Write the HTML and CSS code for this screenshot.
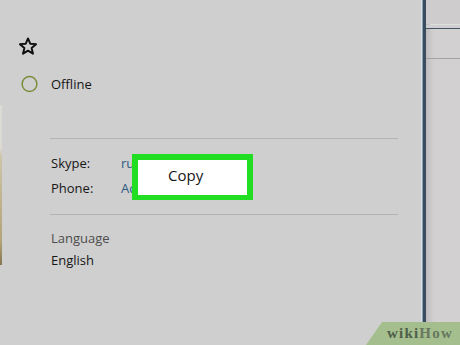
FILE: index.html
```html
<!DOCTYPE html>
<html lang="en">
<head>
<meta charset="utf-8">
<title>Contact profile</title>
<link rel="stylesheet" href="styles.css">
</head>
<body>
<div class="screen">
  <div class="edge"><div class="edge-photo"></div></div>
  <main class="panel">
    <div class="fav">
      <svg class="star" width="18" height="17" viewBox="0 0 18 17">
        <polygon points="9,0.4 11.23,5.73 17.08,6.17 12.61,9.97 14,15.68 9,12.6 4,15.68 5.39,9.97 0.92,6.17 6.77,5.73" />
      </svg>
    </div>
    <div class="status">
      <span class="status-icon">
        <svg width="18" height="18" viewBox="0 0 18 18"><circle cx="9.5" cy="9" r="7.4" /></svg>
      </span>
      <span>Offline</span>
    </div>
    <hr class="divider">
    <dl class="details">
      <div class="row"><dt>Skype:</dt><dd class="link">ru</dd></div>
      <div class="row"><dt>Phone:</dt><dd class="link">Ac</dd></div>
    </dl>
    <hr class="divider divider-2">
    <div class="lang">
      <div class="lang-label">Language</div>
      <div class="lang-value">English</div>
    </div>
  </main>
  <div class="splitter"></div>
  <aside class="side">
    <div class="side-top"></div>
    <div class="side-hi"></div>
    <div class="side-band"></div>
    <div class="side-dark"></div>
    <div class="side-row"></div>
    <div class="side-grey"></div>
  </aside>
  <div class="menu">Copy</div>
  <div class="wm">wiki<span class="wm-how">How</span></div>
</div>
</body>
</html>
```

FILE: styles.css
```css
html, body {
  margin: 0;
  padding: 0;
}
body {
  background: #cfcfcf;
  font-family: "Open Sans", "Noto Sans", sans-serif;
  color: #161616;
  font-size: 13px;
}
.screen {
  position: relative;
  display: flex;
  width: 460px;
  height: 345px;
  overflow: hidden;
}
.edge {
  width: 3px;
  flex: none;
  padding-top: 105px;
  box-sizing: border-box;
}
.edge-photo {
  width: 2px;
  height: 160px;
  background: linear-gradient(#dcdad5 0 27%, #cdc4aa 32%, #c2b692 55%, #b3a478 85%, #857650 100%);
}
.panel {
  width: 418px;
  flex: none;
  box-sizing: border-box;
  padding: 38px 23px 0 17px;
}
.fav {
  height: 16px;
}
.star {
  display: block;
  overflow: visible;
  margin-left: -1px;
}
.star polygon {
  fill: none;
  stroke: #0e0e0e;
  stroke-width: 1.9;
  stroke-linejoin: round;
}
.status {
  display: flex;
  align-items: center;
  height: 20px;
  line-height: 20px;
  margin-top: 20px;
}
.status-icon {
  width: 31px;
  flex: none;
  display: flex;
}
.status-icon svg {
  display: block;
}
.status-icon circle {
  fill: none;
  stroke: #7c8e3e;
  stroke-width: 1.5;
}
.divider {
  border: 0;
  height: 1px;
  background: #b3b3b3;
  margin: 44px 0 0 30px;
}
.divider-2 {
  margin-top: 13px;
}
.details {
  margin: 12px 0 0 31px;
}
.row {
  display: flex;
  line-height: 25px;
}
.row dt {
  width: 70px;
  flex: none;
}
.row dd {
  margin: 0;
}
.link {
  color: #2c5a82;
}
.lang {
  margin: 12px 0 0 31px;
  line-height: 22px;
}
.lang-label {
  color: #4d4d4d;
}
.splitter {
  width: 5px;
  flex: none;
  background: linear-gradient(to right, #d4e2ec 0 1px, #8fa2b2 1px 2px, #3a4c5f 2px 5px);
}
.side {
  flex: 1;
  background: #d2d0d0;
  box-shadow: inset 6px 0 6px -3px rgba(0, 0, 0, 0.12);
}
.side-top {
  height: 24px;
  background: #cecccc;
}
.side-hi {
  height: 1px;
  margin-left: 4px;
  background: #dedede;
}
.side-band {
  height: 3px;
  background: #d0cece;
}
.side-dark {
  height: 1px;
  background: #435467;
}
.side-row {
  height: 29px;
}
.side-grey {
  height: 1px;
  background: #a3a3a3;
}
.menu {
  position: absolute;
  left: 132px;
  top: 154px;
  width: 121px;
  height: 46px;
  box-sizing: border-box;
  border: 6px solid #22de22;
  border-bottom-width: 5px;
  background: #ffffff;
  padding: 0 0 0 30px;
  font-size: 15px;
  line-height: 30px;
  color: #161616;
}
.wm {
  position: absolute;
  right: 0;
  bottom: 0;
  width: 94px;
  height: 23px;
  box-sizing: border-box;
  padding-left: 21px;
  background: #a4bf8d;
  clip-path: polygon(16px 0, 100% 0, 100% 100%, 0 100%);
  font-family: "Liberation Serif", serif;
  font-weight: bold;
  font-size: 15px;
  letter-spacing: 1.2px;
  line-height: 23px;
  color: #4f5e4b;
}
.wm-how {
  color: #68775f;
}
```
